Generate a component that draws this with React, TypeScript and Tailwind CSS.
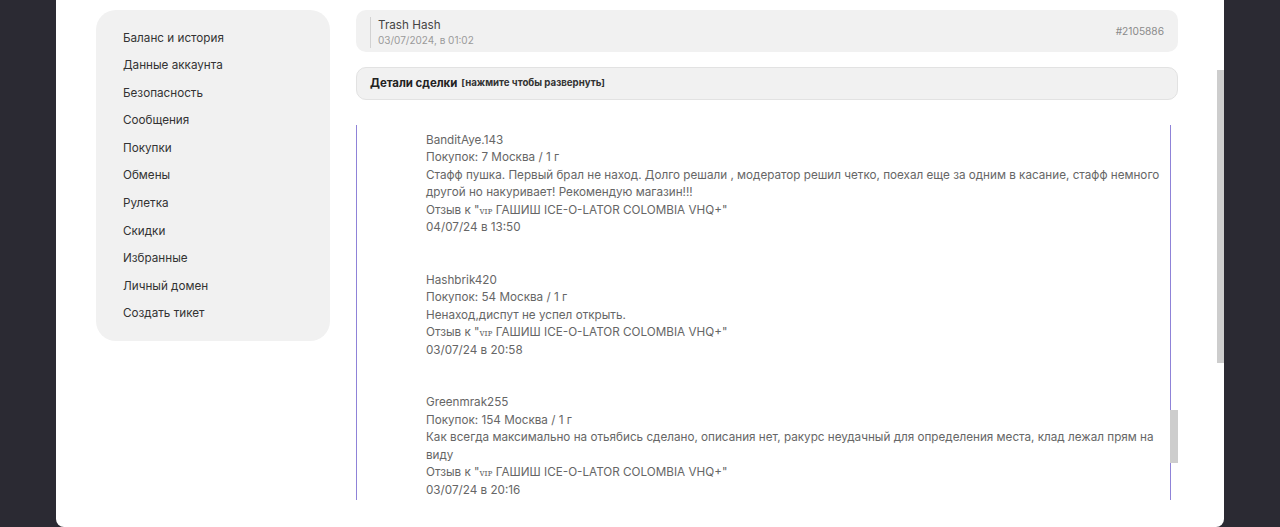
import React from "react";

const menu = [
  "Баланс и история",
  "Данные аккаунта",
  "Безопасность",
  "Сообщения",
  "Покупки",
  "Обмены",
  "Рулетка",
  "Скидки",
  "Избранные",
  "Личный домен",
  "Создать тикет",
];

type Review = { name: string; count: string; text: string; date: string };

const reviews: Review[] = [
  {
    name: "BanditAye.143",
    count: "Покупок: 7 Москва / 1 г",
    text: "Стафф пушка. Первый брал не наход. Долго решали , модератор решил четко, поехал еще за одним в касание, стафф немного другой но накуривает! Рекомендую магазин!!!",
    date: "04/07/24 в 13:50",
  },
  {
    name: "Hashbrik420",
    count: "Покупок: 54 Москва / 1 г",
    text: "Ненаход,диспут не успел открыть.",
    date: "03/07/24 в 20:58",
  },
  {
    name: "Greenmrak255",
    count: "Покупок: 154 Москва / 1 г",
    text: "Как всегда максимально на отьябись сделано, описания нет, ракурс неудачный для определения места, клад лежал прям на виду",
    date: "03/07/24 в 20:16",
  },
];

export default function App() {
  return (
    <div className="h-[527px] w-[1280px] overflow-hidden bg-[#2b2a33] flex font-['Inter',sans-serif]">
      <div className="ml-[56px] w-[1168px] h-[527px] bg-white rounded-b-[8px] relative flex">
        {/* page scrollbar thumb */}
        <div className="absolute right-0 top-[70px] w-[7px] h-[293px] bg-[#cdcdcd]" />

        {/* sidebar */}
        <div className="ml-[40px] mt-[10px] w-[234px] h-[331px] bg-[#f1f1f1] rounded-[20px] pt-[14.5px] pl-[27px]">
          {menu.map((m) => (
            <div key={m} className="h-[27.6px] flex items-center text-[11.7px] text-[#333333]">
              {m}
            </div>
          ))}
        </div>

        {/* right column */}
        <div className="ml-[26px] w-[822px] pt-[10px] flex flex-col">
          <div className="h-[42px] bg-[#f1f1f1] rounded-[10px] flex items-center justify-between pl-[14px] pr-[14px] pt-[2px]">
            <div className="border-l border-[#d2d2d2] pl-[7px] flex flex-col">
              <span className="text-[11.7px] leading-[16px] text-[#444444]">Trash Hash</span>
              <span className="text-[10px] leading-[15px] text-[#9a9a9a]">03/07/2024, в 01:02</span>
            </div>
            <span className="text-[10.2px] text-[#8a8a8a]">#2105886</span>
          </div>

          <div className="mt-[15px] h-[33px] bg-[#f1f1f1] border border-[#e2e2e2] rounded-[10px] flex items-center pl-[13px]">
            <span className="text-[11.4px] font-bold text-[#222222]">Детали сделки</span>
            <span className="ml-[4px] text-[9.7px] font-bold text-[#333333]">[нажмите чтобы развернуть]</span>
          </div>

          <div className="mt-[25px] h-[375px] w-[815px] border-l border-r border-[#8f83d8] relative overflow-hidden">
            <div className="pl-[69px] pr-[8px] pt-[6.5px] text-[11.7px] leading-[17.5px] text-[#666666]">
              {reviews.map((r) => (
                <div key={r.name} className="mb-[35px]">
                  <div>{r.name}</div>
                  <div>{r.count}</div>
                  <div>{r.text}</div>
                  <div>
                    Отзыв к "<span className="font-['DejaVu_Serif',serif] text-[9px] leading-none">ᴠɪᴘ</span> ГАШИШ ICE-O-LATOR COLOMBIA VHQ+"
                  </div>
                  <div>{r.date}</div>
                </div>
              ))}
            </div>
          </div>
          {/* inner scroll thumb */}
          <div className="absolute left-[1114px] top-[410px] w-[8px] h-[53px] bg-[#cdcdcd]" />
        </div>
      </div>
    </div>
  );
}
